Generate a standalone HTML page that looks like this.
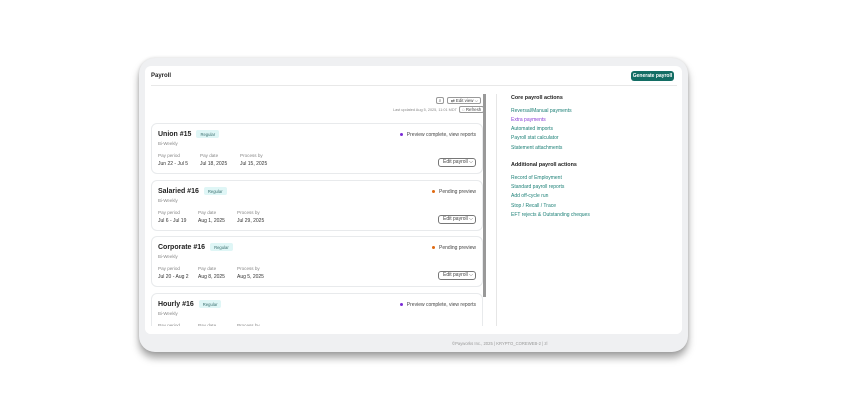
<!DOCTYPE html>
<html><head><style>
*{box-sizing:border-box;margin:0;padding:0}
body{width:860px;height:411px;background:#fff;font-family:"Liberation Sans",sans-serif;position:relative;overflow:hidden;color:#222}
.dev{position:absolute;left:139px;top:58px;width:549px;height:294px;background:#eff0f2;border-radius:16px;box-shadow:0 6px 8px rgba(0,0,0,.35),0 0 3px rgba(0,0,0,.15)}
.pan{position:absolute;left:145px;top:66px;width:537px;height:268px;background:#fff;border-radius:6px;overflow:hidden}
.abs{position:absolute}
.t{font-size:4.6px;color:#888;position:absolute;white-space:nowrap}
.v{font-size:5px;color:#333;position:absolute;white-space:nowrap}
.card{position:absolute;left:6px;width:332px;height:51px;border:1px solid #e8eaec;border-radius:6px;background:#fff}
.card h3{position:absolute;left:6px;top:6px;font-size:7px;font-weight:bold;color:#222;white-space:nowrap}
.tag{display:inline-block;background:#dff6f6;color:#3a6e6e;font-size:4.2px;font-weight:normal;padding:1.5px 4px;border-radius:2px;margin-left:5px;vertical-align:middle}
.st{position:absolute;right:6px;top:8px;font-size:5px;color:#444}
.dot{display:inline-block;width:3px;height:3px;border-radius:50%;margin-right:4px;vertical-align:middle}
.btn{position:absolute;right:6px;top:34px;width:38px;height:9px;border:1px solid #777;border-radius:3px;font-size:5px;color:#444;padding:0 0 0 4px;line-height:7px}
.lk{position:absolute;left:366px;font-size:5px;color:#1d8077;white-space:nowrap}
.bw{position:absolute;left:6px;top:17px;font-size:4.4px;color:#888}
.sb{position:absolute;height:7px;border:1px solid #999;border-radius:2px;font-size:4.4px;line-height:5px;color:#444;white-space:nowrap}
</style></head><body>
<div class="dev"></div>
<div class="t" style="left:452px;top:341px;font-size:4.2px;color:#999">©Payworks Inc., 2025 | KRYPTO_COREWEB-2 | zl</div>
<div class="pan">
 <div class="abs" style="left:6px;top:7px;font-size:6px;font-weight:bold">Payroll</div>
 <div class="abs" style="left:486px;top:5px;width:43px;height:10px;background:#136d64;border-radius:3px;color:#fff;font-size:5px;font-weight:bold;text-align:center;line-height:10px">Generate payroll</div>
 <div class="abs" style="left:6px;top:19px;width:526px;height:1px;background:#e8e8e8"></div>
 <div class="sb" style="left:291px;top:31px;width:8px;text-align:center">⌕</div>
 <div class="sb" style="left:302px;top:31px;width:34px;padding-left:3px">⇄ Edit view ⌵</div>
 <div class="t" style="left:248px;top:42px;font-size:3.8px">Last updated Aug 5, 2025, 11:01 MDT</div>
 <div class="sb" style="left:314px;top:40px;width:25px;padding-left:2px">◌ Refresh</div>
 <div class="abs" style="left:338px;top:28px;width:3px;height:203px;background:#999"></div>
 <div class="abs" style="left:351px;top:28px;width:1px;height:232px;background:#e6e6e6"></div>

 <div class="card" style="top:57px"><h3>Union #15<span class="tag">Regular</span></h3><div class="bw">Bi-Weekly</div><div class="st"><span class="dot" style="background:#7b2bd6"></span>Preview complete, view reports</div>
 <div class="t" style="left:6px;top:29px">Pay period</div><div class="t" style="left:48px;top:29px">Pay date</div><div class="t" style="left:88px;top:29px">Process by</div>
 <div class="v" style="left:6px;top:37px">Jun 22 - Jul 5</div><div class="v" style="left:48px;top:37px">Jul 18, 2025</div><div class="v" style="left:88px;top:37px">Jul 15, 2025</div>
 <div class="btn">Edit payroll ⌵</div></div>

 <div class="card" style="top:114px"><h3>Salaried #16<span class="tag">Regular</span></h3><div class="bw">Bi-Weekly</div><div class="st"><span class="dot" style="background:#e06a12"></span>Pending preview</div>
 <div class="t" style="left:6px;top:29px">Pay period</div><div class="t" style="left:46px;top:29px">Pay date</div><div class="t" style="left:85px;top:29px">Process by</div>
 <div class="v" style="left:6px;top:37px">Jul 6 - Jul 19</div><div class="v" style="left:46px;top:37px">Aug 1, 2025</div><div class="v" style="left:85px;top:37px">Jul 29, 2025</div>
 <div class="btn">Edit payroll ⌵</div></div>

 <div class="card" style="top:170px"><h3>Corporate #16<span class="tag">Regular</span></h3><div class="bw">Bi-Weekly</div><div class="st"><span class="dot" style="background:#e06a12"></span>Pending preview</div>
 <div class="t" style="left:6px;top:29px">Pay period</div><div class="t" style="left:46px;top:29px">Pay date</div><div class="t" style="left:85px;top:29px">Process by</div>
 <div class="v" style="left:6px;top:37px">Jul 20 - Aug 2</div><div class="v" style="left:46px;top:37px">Aug 8, 2025</div><div class="v" style="left:85px;top:37px">Aug 5, 2025</div>
 <div class="btn">Edit payroll ⌵</div></div>

 <div class="card" style="top:227px"><h3>Hourly #16<span class="tag">Regular</span></h3><div class="bw">Bi-Weekly</div><div class="st"><span class="dot" style="background:#7b2bd6"></span>Preview complete, view reports</div>
 <div class="t" style="left:6px;top:29px">Pay period</div><div class="t" style="left:46px;top:29px">Pay date</div><div class="t" style="left:85px;top:29px">Process by</div></div>
 <div class="abs" style="left:0;top:260px;width:537px;height:8px;background:#fff"></div>

 <div class="abs" style="left:366px;top:29px;font-size:5.4px;font-weight:bold">Core payroll actions</div>
 <div class="lk" style="top:42px">Reversal/Manual payments</div>
 <div class="lk" style="top:51px;color:#8a3fd6">Extra payments</div>
 <div class="lk" style="top:60px">Automated imports</div>
 <div class="lk" style="top:69px">Payroll stat calculator</div>
 <div class="lk" style="top:79px">Statement attachments</div>
 <div class="abs" style="left:366px;top:96px;font-size:5.4px;font-weight:bold">Additional payroll actions</div>
 <div class="lk" style="top:109px">Record of Employment</div>
 <div class="lk" style="top:118px">Standard payroll reports</div>
 <div class="lk" style="top:127px">Add off-cycle run</div>
 <div class="lk" style="top:137px">Stop / Recall / Trace</div>
 <div class="lk" style="top:146px">EFT rejects &amp; Outstanding cheques</div>
</div>
</body></html>
